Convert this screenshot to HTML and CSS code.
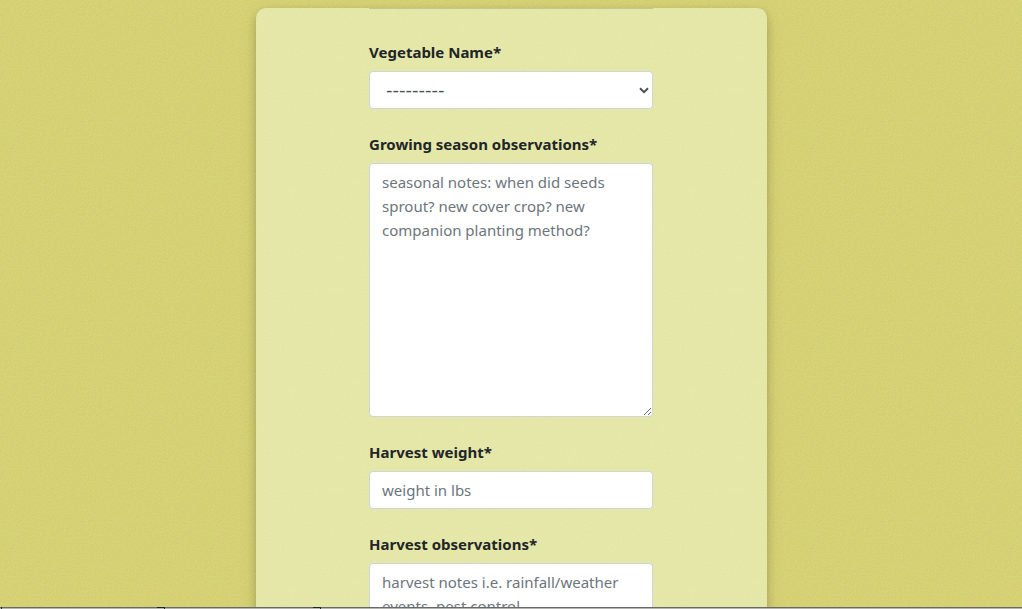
FILE: index.html
```
<!DOCTYPE html>
<html lang="en">
<head>
<meta charset="utf-8">
<title>Vegetable journal</title>
<link rel="stylesheet" href="styles.css">
</head>
<body>
<main class="page">
  <form class="card">
    <div class="fields">
      <div class="field">
        <label class="label" for="vegetable">Vegetable Name*</label>
        <div class="select-wrap">
          <select class="control select" id="vegetable"><option>---------</option></select>
          <svg class="chevron" viewBox="0 0 10 7" aria-hidden="true"><path d="M1 1.2 5 5.2 9 1.2"/></svg>
        </div>
      </div>
      <div class="field">
        <label class="label" for="season">Growing season observations*</label>
        <textarea class="control area" id="season" rows="10" placeholder="seasonal notes: when did seeds sprout? new cover crop? new companion planting method?"></textarea>
      </div>
      <div class="field">
        <label class="label" for="weight">Harvest weight*</label>
        <input class="control" id="weight" type="text" placeholder="weight in lbs">
      </div>
      <div class="field">
        <label class="label" for="harvest">Harvest observations*</label>
        <textarea class="control area" id="harvest" rows="10" placeholder="harvest notes i.e. rainfall/weather events, pest control"></textarea>
      </div>
    </div>
  </form>
</main>
<footer class="strip">
  <svg class="marks" width="330" height="2" aria-hidden="true"><path d="M1 0h1v2h-1zM157 0h8v2h-1v-1h-7zM313 0h8v2h-1v-1h-7z"/></svg>
</footer>
</body>
</html>
```
FILE: styles.css
```
* { box-sizing: border-box; }

body {
  margin: 0;
  height: 100vh;
  display: flex;
  flex-direction: column;
  overflow: hidden;
  font-family: "Segoe UI", "Noto Sans", sans-serif;
  font-size: 15px;
  line-height: 24px;
  color: #212529;
  background-color: #d6d174;
  background-image: url("data:image/svg+xml,%3Csvg xmlns='http://www.w3.org/2000/svg' width='200' height='200'%3E%3Cfilter id='n'%3E%3CfeTurbulence type='fractalNoise' baseFrequency='.6' numOctaves='2' stitchTiles='stitch'/%3E%3CfeColorMatrix values='1 0 0 0 0 0 1 0 0 0 0 0 1 0 0 0 0 0 0 .12'/%3E%3C/filter%3E%3Crect width='200' height='200' fill='%23d9d46b'/%3E%3Crect width='200' height='200' filter='url(%23n)'/%3E%3C/svg%3E");
}

.page {
  flex: 1;
  min-height: 0;
  overflow: hidden;
  padding-top: 8px;
}

.card {
  display: grid;
  grid-template-columns: 2fr 5fr 2fr;
  width: 50%;
  margin: 0 auto;
  border-radius: 10px;
  background: rgba(244, 253, 220, 0.5);
  box-shadow: 0 4px 8px rgba(0, 0, 0, 0.2), 0 6px 20px rgba(0, 0, 0, 0.08);
}

.fields {
  grid-column: 2;
  display: flex;
  flex-direction: column;
  gap: 23px;
  padding: 31px 0;
  border-top: 1px solid rgba(0, 0, 0, 0.14);
}

.field {
  display: flex;
  flex-direction: column;
  gap: 7px;
}

.label { font-weight: 700; }

.control {
  display: block;
  width: 100%;
  height: 38px;
  margin: 0;
  padding: 6px 12px;
  border: 1px solid #ced4da;
  border-radius: 4px;
  background: #fff;
  color: #495057;
  font: inherit;
}

.control::placeholder { color: #6c757d; opacity: 1; }

.area {
  height: auto;
  resize: vertical;
  overflow: auto;
}

.select-wrap { position: relative; }

.select {
  appearance: none;
  padding-left: 16px;
  font-family: "DejaVu Sans", sans-serif;
  font-size: 18px;
}

.chevron {
  position: absolute;
  right: 4px;
  top: 16px;
  width: 10px;
  height: 7px;
  fill: none;
  stroke: #495057;
  stroke-width: 2;
  pointer-events: none;
}

.strip {
  height: 2px;
  border-top: 1px solid #696969;
  background: #b4b4b0;
}

.marks {
  display: block;
  margin-top: -1px;
  fill: #16252e;
}
```
